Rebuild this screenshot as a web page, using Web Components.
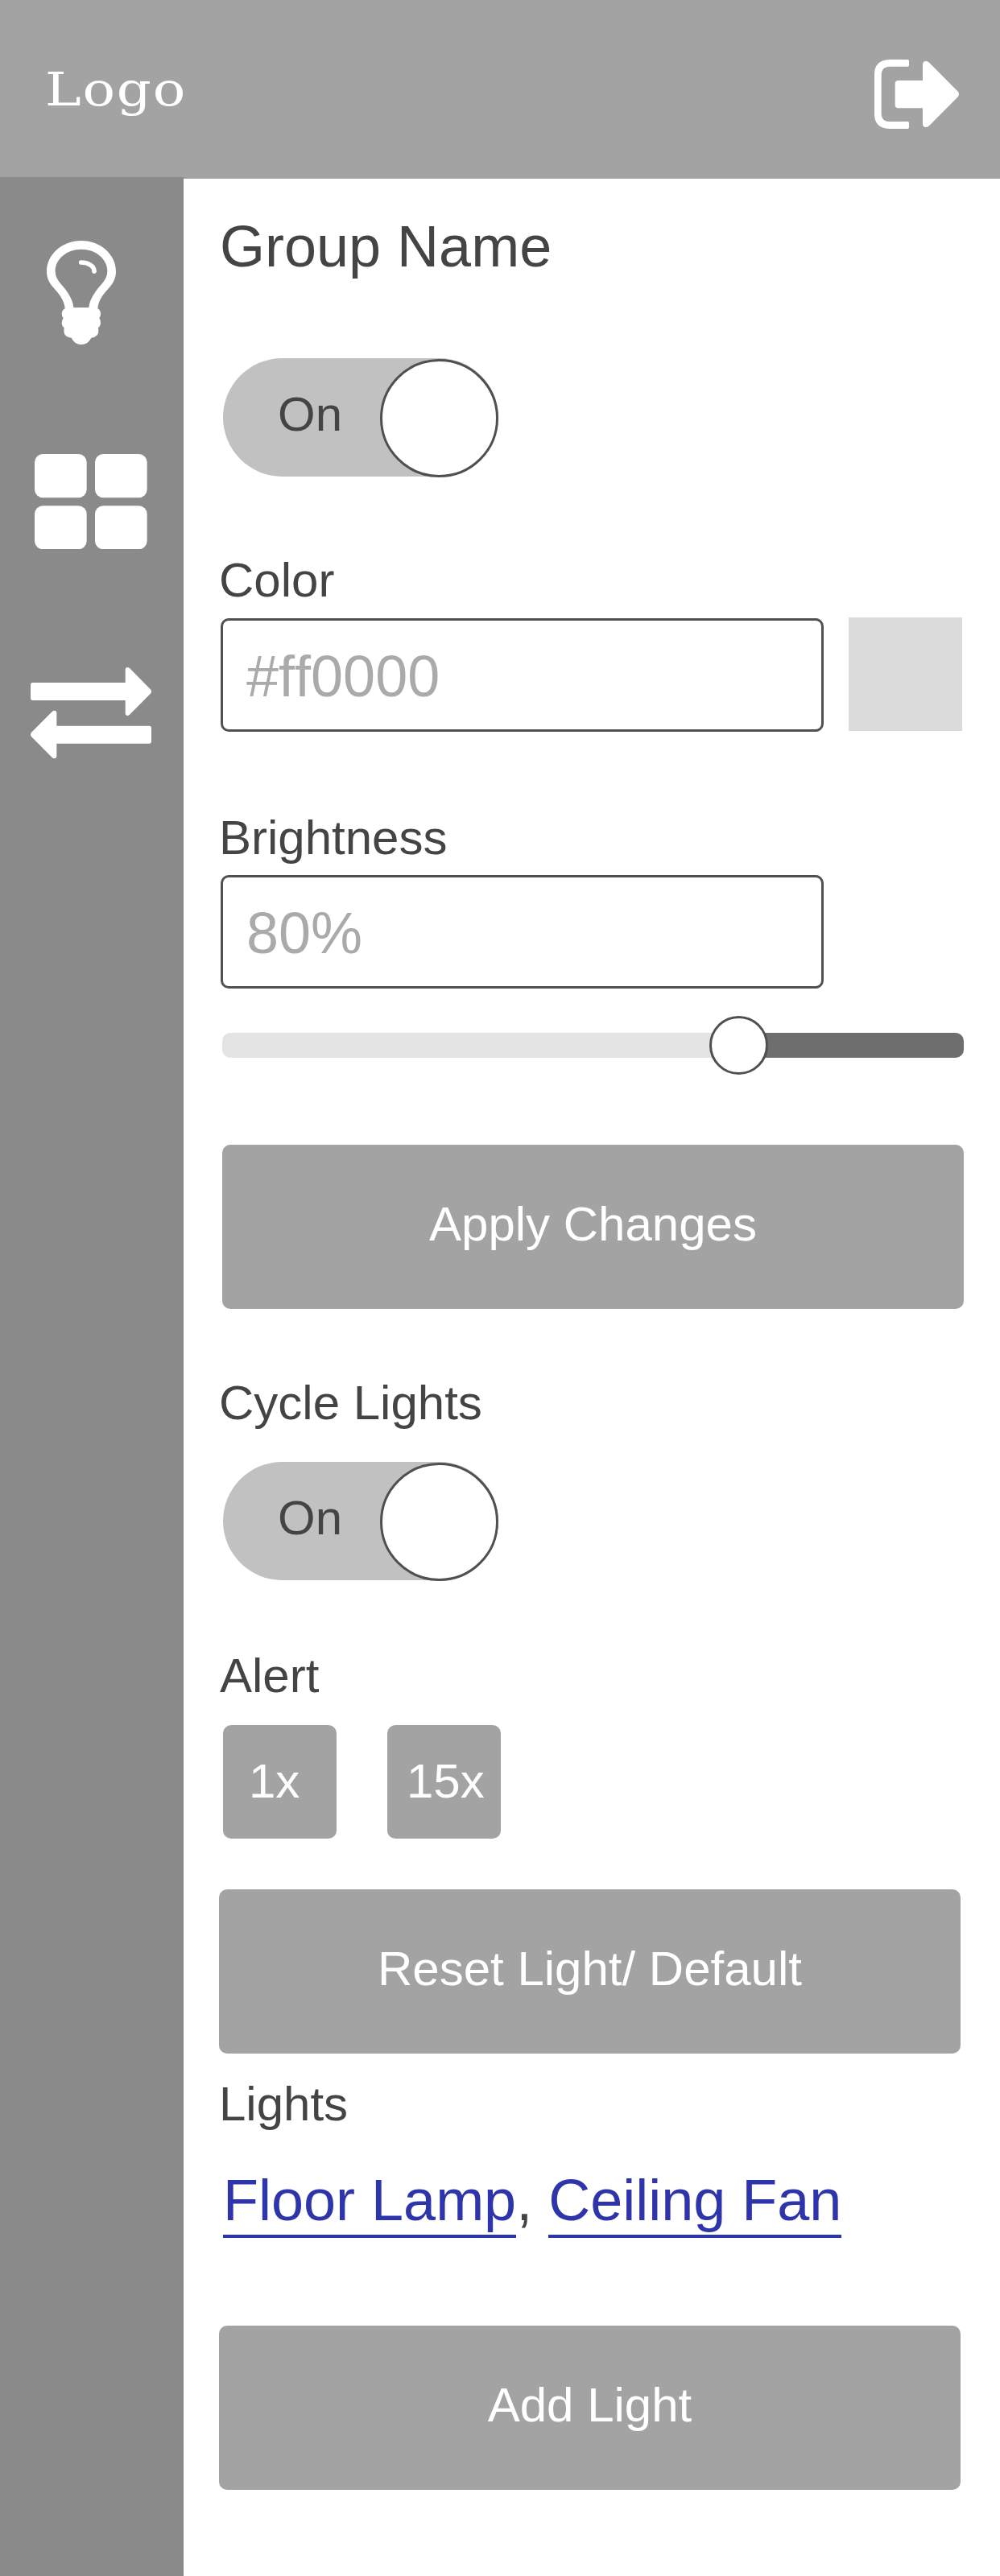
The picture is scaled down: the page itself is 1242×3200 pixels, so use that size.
<!DOCTYPE html>
<html lang="en">
<head>
<meta charset="utf-8">
<title>Group settings</title>
<style>
html,body{margin:0;background:#fff}
body{width:1242px;height:3200px;overflow:hidden;font-family:"Liberation Sans",Arial,sans-serif;font-kerning:none;font-variant-ligatures:none;color:#444}
</style>
</head>
<body>
<group-page></group-page>
<script>
function define(name, markup, setup) {
  customElements.define(name, class extends HTMLElement {
    constructor() {
      super();
      const root = this.attachShadow({mode: 'open'});
      root.innerHTML = markup;
    }
    connectedCallback() { if (setup) setup(this); }
  });
}

define('app-header', `<style>
:host{display:flex;box-sizing:border-box;height:222px;background:#a3a3a3;padding:74px 51px 0 56px;justify-content:space-between;align-items:flex-start}
.logo{font:57.6px/60px "DejaVu Serif",serif;letter-spacing:1.5px;color:#fff;margin-top:8px;transform:scaleX(1.17);transform-origin:0 0}
svg{display:block}
</style>
<span class="logo"><slot></slot></span>
<svg width="105" height="86" viewBox="108 102 315 258" fill="#fff"><path d="M163 102H232Q237 102 237 107V123Q237 128 232 128H166Q134 128 134 160V302Q134 333 166 333H232Q237 333 237 338V354Q237 360 232 360H163Q108 357 108 305V157Q108 105 163 102Z"/><path d="M197 180H288V121Q288 108 301 108Q307 108 312 113L420 222Q426 231 420 240L312 349Q307 354 301 354Q288 354 288 341V283H197Q185 283 185 271V192Q185 180 197 180Z"/></svg>`);

define('side-nav', `<style>
:host{display:flex;flex-direction:column;align-items:flex-start;box-sizing:border-box;width:228px;flex:none;margin-top:-2px;height:2980px;background:#8a8a8a;padding-top:79px}
svg{display:block;flex:none}
.bulb{margin-left:58px}
.grid{margin:135.67px 0 146.67px 43px}
.swap{margin-left:38px}
</style>
<svg class="bulb" width="86" height="129" viewBox="174 87 258 387"><path fill="#fff" fill-rule="evenodd" d="M303 87C375 87 432 139 432 201C432 227 422 245 407 262C388 284 367 307 364 340Q376 347 375 362Q374 370 370 376Q376 384 375 395Q374 405 366 412Q369 430 362 439Q354 448 340 449Q328 474 303 474Q278 474 266 449Q250 448 243 439Q236 430 239 412Q231 406 230 395Q230 384 236 376Q231 370 230 362Q230 346 242 340C239 307 218 284 199 262C184 245 174 227 174 201C174 139 231 87 303 87ZM303 119C249 119 206 155 206 201C206 218 213 231 222 242C238 261 272 298 274 336H331C334 298 368 261 384 242C393 231 400 218 400 201C400 155 357 119 303 119Z"/><path d="M302 168C326 168 351 180 351 201" fill="none" stroke="#fff" stroke-width="17" stroke-linecap="round"/></svg>
<svg class="grid" width="140" height="118.67" viewBox="129 71 420 356" fill="#fff"><rect x="129" y="71" width="194" height="163" rx="31"/><rect x="354" y="71" width="194" height="163" rx="31"/><rect x="129" y="264" width="194" height="162" rx="31"/><rect x="354" y="264" width="194" height="162" rx="31"/></svg>
<svg class="swap" width="150" height="113.33" viewBox="114 867 450 340" fill="#fff"><path d="M122 924H467V876Q467 867 475 867Q479 867 483 870L562 950Q566 957 562 964L483 1043Q479 1047 475 1047Q467 1046 467 1038V990H122Q114 990 114 982V932Q114 924 122 924Z"/><path d="M556 1085H211V1037Q211 1028 203 1028Q199 1028 195 1031L116 1111Q112 1118 116 1124L195 1204Q199 1207 203 1207Q211 1206 211 1198V1151H556Q564 1151 564 1143V1093Q564 1085 556 1085Z"/></svg>`);

define('text-label', `<style>
:host{display:block;font-size:60px;line-height:60px;height:60px;white-space:nowrap}
:host([large]){font-size:72px;line-height:72px;height:72px}
</style><slot></slot>`);

define('toggle-switch', `<style>
:host{display:flex;box-sizing:border-box;width:342px;height:147px;margin-left:5px;border-radius:73.5px;background:#c1c1c1;justify-content:space-between;padding-left:68px;align-items:flex-start}
span{font-size:60px;line-height:60px;margin-top:40px}
i{box-sizing:border-box;width:147px;height:147px;border:3px solid #505050;border-radius:50%;background:#fff;margin-top:.5px}
</style><span><slot></slot></span><i></i>`);

define('text-field', `<style>
:host{display:block;box-sizing:border-box;width:749px;height:141px;border:3px solid #505050;border-radius:10px;background:#fff;color:#aaa;font-size:72px;line-height:72px;padding:33px 0 0 29px}
</style><slot></slot>`);

define('color-swatch', `<style>:host{display:block;width:141px;height:141px;background:#dbdbdb}</style>`);

define('range-slider', `<style>
:host{display:flex;align-items:center;width:921px;height:73px}
.low,.high{height:31px;background:#e4e4e4}
.low{width:642px;border-radius:10px 0 0 10px;margin-right:-37px}
.high{flex:1;background:#6e6e6e;border-radius:0 10px 10px 0;margin-left:-37px}
.knob{box-sizing:border-box;width:73px;height:73px;border:3px solid #505050;border-radius:50%;background:#fff;z-index:1}
</style><div class="low"></div><div class="knob"></div><div class="high"></div>`);

define('block-button', `<style>
:host{display:flex;box-sizing:border-box;width:921px;height:204px;border-radius:10px;background:#a3a3a3;color:#fff;justify-content:center;font-size:60px;line-height:60px;padding-top:69px;white-space:nowrap}
:host([small]){width:141px;height:141px;padding-top:40px;justify-content:flex-start}
</style><slot></slot>`);

define('light-link', `<style>
:host{display:block;color:#2e35ab;height:83px;box-sizing:border-box;border-bottom:4px solid #2e35ab;white-space:nowrap}
</style><slot></slot>`);

define('group-page', `<style>
:host{display:block;width:1242px;height:3200px}
.body{display:flex;align-items:flex-start}
main{display:flex;flex-direction:column;align-items:flex-start;padding:48px 0 0 44px}
.row{display:flex;align-items:flex-start}
.links{font-size:72px;line-height:72px;height:83px;margin:53px 0 0 5px;white-space:pre}
</style>
<app-header>Logo</app-header>
<div class="body">
<side-nav></side-nav>
<main>
<text-label large style="margin-left:1px">Group Name</text-label>
<toggle-switch style="margin-top:103px">On</toggle-switch>
<text-label style="margin-top:99px">Color</text-label>
<div class="row" style="margin:16px 0 0 2px;gap:31px"><text-field style="margin-top:1px">#ff0000</text-field><color-swatch></color-swatch></div>
<text-label style="margin-top:102px">Brightness</text-label>
<text-field style="margin:16px 0 0 2px">80%</text-field>
<range-slider style="margin:34px 0 0 4px"></range-slider>
<block-button style="margin:87px 0 0 4px">Apply Changes</block-button>
<text-label style="margin-top:87px">Cycle Lights</text-label>
<toggle-switch style="margin-top:43px">On</toggle-switch>
<text-label style="margin:89px 0 0 1px">Alert</text-label>
<div class="row" style="margin:31px 0 0 5px;gap:63px"><block-button small style="padding-left:32px">1x</block-button><block-button small style="padding-left:24px">15x</block-button></div>
<block-button style="margin-top:63px">Reset Light/ Default</block-button>
<text-label style="margin-top:33px">Lights</text-label>
<div class="row links"><light-link>Floor Lamp</light-link><span>, </span><light-link>Ceiling Fan</light-link></div>
<block-button style="margin-top:109px">Add Light</block-button>
</main>
</div>`);
</script>
</body>
</html>
